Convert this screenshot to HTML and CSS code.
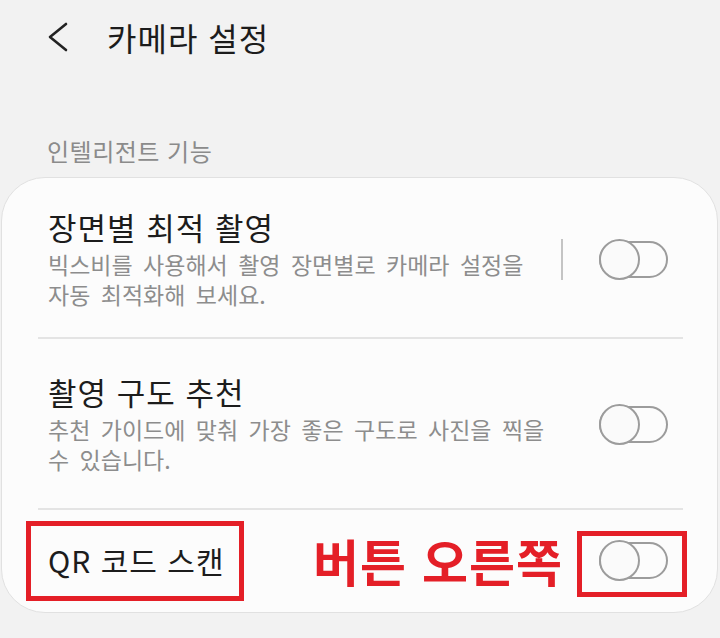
FILE: index.html
```html
<!DOCTYPE html>
<html lang="ko">
<head>
<meta charset="utf-8">
<title>카메라 설정</title>
<link rel="stylesheet" href="styles.css">
</head>
<body>
<header class="appbar">
  <svg class="back" width="24" height="32" viewBox="0 0 24 32"><polyline points="19,3 3,16 19,29" fill="none" stroke="#222" stroke-width="2.6" stroke-linecap="round" stroke-linejoin="round"/></svg>
  <h1 class="title">카메라 설정</h1>
</header>
<div class="section-label">인텔리전트 기능</div>
<section class="card">
  <div class="row row-first">
    <div class="text">
      <div class="item-title">장면별 최적 촬영</div>
      <div class="item-sub">빅스비를 사용해서 촬영 장면별로 카메라 설정을<br>자동 최적화해 보세요.</div>
    </div>
    <div class="vsep"></div>
    <div class="toggle"><span class="knob"></span></div>
  </div>
  <div class="divider"></div>
  <div class="row row-second">
    <div class="text">
      <div class="item-title">촬영 구도 추천</div>
      <div class="item-sub">추천 가이드에 맞춰 가장 좋은 구도로 사진을 찍을<br>수 있습니다.</div>
    </div>
    <div class="toggle"><span class="knob"></span></div>
  </div>
  <div class="divider"></div>
  <div class="row row-last">
    <div class="text">
      <div class="item-title">QR 코드 스캔</div>
    </div>
    <div class="note">버튼 오른쪽</div>
    <div class="toggle"><span class="knob"></span></div>
    <div class="mark mark-title"></div>
    <div class="mark mark-toggle"></div>
  </div>
</section>
</body>
</html>
```
FILE: styles.css
```css
html, body {
  margin: 0;
  padding: 0;
}
body {
  background: #f2f2f2;
  font-family: "Noto Sans CJK KR", "Noto Sans", sans-serif;
  width: 720px;
  height: 638px;
  overflow: hidden;
}
.appbar {
  display: flex;
  align-items: center;
  height: 74px;
  padding-left: 47px;
}
.back {
  display: block;
  margin-right: 36px;
}
.title {
  margin: 0;
  font-size: 32px;
  font-weight: 400;
  color: #1c1c1c;
  letter-spacing: 1px;
}
.section-label {
  padding: 60px 0 0 47px;
  margin-bottom: 9px;
  font-size: 24px;
  line-height: 34px;
  color: #8b8b8b;
  letter-spacing: 0.5px;
}
.card {
  margin: 0 2px 0 1px;
  background: #fcfcfc;
  border: 1px solid #e1e1e1;
  border-radius: 44px;
  height: 436px;
  box-sizing: border-box;
}
.row {
  display: flex;
  align-items: center;
  padding: 0 49px 0 46px;
  position: relative;
}
.row-first {
  padding-top: 31px;
  padding-bottom: 28px;
}
.row-second {
  padding-top: 35px;
  padding-bottom: 34px;
}
.row-last {
  height: 100px;
}
.text {
  flex: 1;
  min-width: 0;
}
.item-title {
  font-size: 31px;
  line-height: 36px;
  color: #1c1c1c;
  letter-spacing: 1px;
  margin-bottom: 4px;
}
.row-last .item-title {
  margin-bottom: 0;
  font-size: 30px;
}
.item-sub {
  font-size: 23px;
  line-height: 30px;
  color: #8d8d8d;
  word-spacing: 4px;
  white-space: nowrap;
}
.vsep {
  width: 2px;
  height: 41px;
  background: #c4c4c4;
  margin-right: 36px;
}
.divider {
  height: 2px;
  background: #e4e4e4;
  margin: 0 34px 0 36px;
}
.toggle {
  position: relative;
  width: 69px;
  height: 37px;
  box-sizing: border-box;
  border: 2px solid #9c9c9c;
  border-radius: 19px;
  flex: none;
}
.knob {
  position: absolute;
  left: -2px;
  top: -4px;
  width: 41px;
  height: 41px;
  box-sizing: border-box;
  border: 2px solid #9c9c9c;
  border-radius: 50%;
  background: #fafafa;
}
.note {
  font-size: 50px;
  font-weight: 700;
  color: #e41f27;
  line-height: 54px;
  margin-right: 36px;
  letter-spacing: 1px;
}
.mark {
  position: absolute;
  border: 5px solid #e41f27;
  box-sizing: border-box;
}
.mark-title {
  left: 24px;
  top: 11px;
  width: 218px;
  height: 80px;
}
.mark-toggle {
  left: 575px;
  top: 21px;
  width: 110px;
  height: 66px;
}
```
